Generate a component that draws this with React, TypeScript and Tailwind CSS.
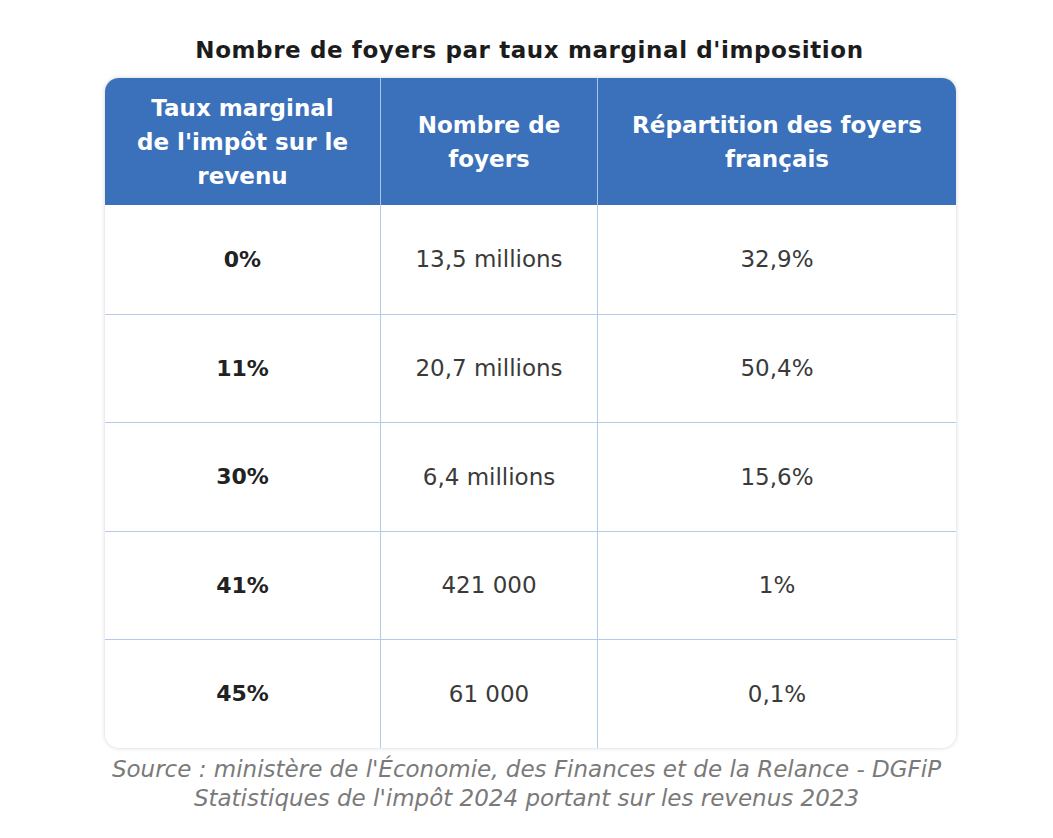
const rows = [
  { rate: "0%", count: "13,5 millions", share: "32,9%" },
  { rate: "11%", count: "20,7 millions", share: "50,4%" },
  { rate: "30%", count: "6,4 millions", share: "15,6%" },
  { rate: "41%", count: "421 000", share: "1%" },
  { rate: "45%", count: "61 000", share: "0,1%" },
];

export default function App() {
  return (
    <div
      className="w-[1053px] h-[838px] bg-white flex flex-col items-center pt-[33px]"
      style={{ fontFamily: "'DejaVu Sans', Inter, sans-serif" }}
    >
      <h1 className="text-[23px] leading-[34px] font-bold tracking-[0.6px] text-[#1c1c1c] ml-[6px]">
        Nombre de foyers par taux marginal d'imposition
      </h1>
      <div className="mt-[11px] w-[851px] ml-[8px] rounded-[14px] overflow-hidden bg-white shadow-[0_0_4px_rgba(0,0,0,0.18)]">
        <div className="grid grid-cols-[276px_217px_1fr] bg-[#3b70ba] h-[127px] text-white text-[23px] leading-[34px] font-bold text-center">
          <div className="flex items-center justify-center px-[30px] border-r border-[#a9c6ea]">
            Taux marginal de l'impôt sur le revenu
          </div>
          <div className="flex items-center justify-center px-8 border-r border-[#a9c6ea]">
            Nombre de foyers
          </div>
          <div className="flex items-center justify-center px-8">
            Répartition des foyers français
          </div>
        </div>
        {rows.map((r, i) => (
          <div
            key={r.rate}
            className={`grid grid-cols-[276px_217px_1fr] h-[108.5px] text-center text-[#1a1a1a] ${
              i > 0 ? "border-t border-[#b2cbea]" : ""
            }`}
          >
            <div className="flex items-center justify-center text-[22px] font-semibold text-[#222] border-r border-[#b2cbea]">
              {r.rate}
            </div>
            <div className="flex items-center justify-center text-[23px] font-normal text-[#3a3a3a] border-r border-[#b2cbea]">
              {r.count}
            </div>
            <div className="flex items-center justify-center text-[23px] font-normal text-[#3a3a3a]">
              {r.share}
            </div>
          </div>
        ))}
      </div>
      <p className="mt-[7px] text-center italic font-light text-[23px] leading-[29px] text-[#7a7a7a]">
        Source : ministère de l'Économie, des Finances et de la Relance - DGFiP
        <br />
        Statistiques de l'impôt 2024 portant sur les revenus 2023
      </p>
    </div>
  );
}
